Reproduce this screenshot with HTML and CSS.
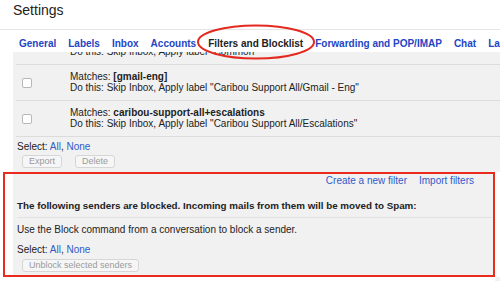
FILE: index.html
```html
<!DOCTYPE html>
<html lang="en">
<head>
  <meta charset="UTF-8">
  <title>Settings - Filters and Blocklist</title>
  <link rel="stylesheet" href="styles.css">
</head>
<body>
<div class="page">
  <h1 class="title">Settings</h1>

  <nav class="tabs">
    <a class="tab">General</a>
    <a class="tab">Labels</a>
    <a class="tab">Inbox</a>
    <a class="tab">Accounts</a>
    <a class="tab active">Filters and Blocklist</a>
    <a class="tab">Forwarding and POP/IMAP</a>
    <a class="tab">Chat</a>
    <a class="tab">Labs</a>
  </nav>

  <div class="panel">
    <div class="filter-list">
      <div class="filter-row first">
        <div class="check-cell"><input type="checkbox" class="check"></div>
        <div class="filter-text">
          <div>Matches: <b>[team-common]</b></div>
          <div>Do this: Skip Inbox, Apply label "Common"</div>
        </div>
      </div>
      <div class="filter-row">
        <div class="check-cell"><input type="checkbox" class="check"></div>
        <div class="filter-text">
          <div>Matches: <b>[gmail-eng]</b></div>
          <div>Do this: Skip Inbox, Apply label "Caribou Support All/Gmail - Eng"</div>
        </div>
      </div>
      <div class="filter-row">
        <div class="check-cell"><input type="checkbox" class="check"></div>
        <div class="filter-text">
          <div>Matches: <b>caribou-support-all+escalations</b></div>
          <div>Do this: Skip Inbox, Apply label "Caribou Support All/Escalations"</div>
        </div>
      </div>
    </div>

    <div class="select-line">Select: <a class="link">All</a>, <a class="link">None</a></div>
    <div class="actions">
      <button class="btn" disabled>Export</button>
      <button class="btn" disabled>Delete</button>
    </div>

    <section class="blocked">
      <div class="filter-links">
        <a class="link">Create a new filter</a>
        <a class="link">Import filters</a>
      </div>
      <h2 class="blocked-title">The following senders are blocked. Incoming mails from them will be moved to Spam:</h2>
      <p class="blocked-note">Use the Block command from a conversation to block a sender.</p>
      <div class="select-line">Select: <a class="link">All</a>, <a class="link">None</a></div>
      <div class="actions">
        <button class="btn wide" disabled>Unblock selected senders</button>
      </div>
    </section>
  </div>

  <!-- red annotations drawn over the screenshot -->
  <svg class="mark-oval" width="122" height="38" viewBox="0 0 122 38">
    <ellipse cx="61" cy="19" rx="58" ry="16.5" fill="none" stroke="#e42a1e" stroke-width="2"/>
  </svg>
  <div class="mark-box"></div>
</div>
</body>
</html>
```

FILE: styles.css
```css
body {
  margin: 0;
  background-color: #ffffff;
  font-family: "Liberation Sans", Arial, Helvetica, sans-serif;
  color: #222222;
}

.page {
  position: relative;
  width: 500px;
  height: 281px;
  overflow: hidden;
}

.title {
  margin: 0;
  padding: 2px 0 10px 13px;
  font-size: 14px;
  line-height: 17px;
  font-weight: normal;
  color: #222222;
  border-bottom: 1px solid #e6e6e6;
}

/* tab bar */
.tabs {
  display: flex;
  gap: 12px;
  padding: 8px 0 2px 19px;
  white-space: nowrap;
}

.tab {
  font-size: 10px;
  line-height: 12px;
  font-weight: bold;
  color: #2445c4;
}

.tab.active {
  color: #222222;
}

/* grey settings panel */
.panel {
  margin-left: 13px;
  background-color: #f1f1f1;
  overflow: hidden;
  font-size: 10px;
  line-height: 11px;
}

.filter-row {
  display: flex;
  margin-left: 3px;
  padding: 6px 0 7px;
  border-bottom: 1px solid #dcdcdc;
}

.filter-row.first {
  margin-top: -23px;
}

.check-cell {
  width: 54px;
  flex-shrink: 0;
}

.check {
  appearance: none;
  display: block;
  width: 10px;
  height: 10px;
  margin: 7px 0 0 6px;
  background-color: #ffffff;
  border: 1px solid #b8b8b8;
  border-radius: 2px;
}

.filter-text {
  white-space: nowrap;
}

.select-line {
  margin-top: 4px;
  padding-left: 4px;
}

.link {
  color: #2f5bc9;
}

.actions {
  display: flex;
  gap: 13px;
  margin-top: 3px;
  padding-left: 9px;
}

.btn {
  height: 13px;
  padding: 0 6px;
  font-family: inherit;
  font-size: 9px;
  line-height: 11px;
  color: #9a9a9a;
  background-color: #f6f6f6;
  border: 1px solid #d6d6d6;
  border-radius: 3px;
}

/* blocked senders */
.blocked {
  padding: 7px 0 12px;
}

.filter-links {
  display: flex;
  justify-content: flex-end;
  gap: 12px;
  padding-right: 26px;
}

.blocked-title {
  margin: 14px 8px 0 4px;
  padding-bottom: 6px;
  font-size: 9.8px;
  line-height: 11px;
  font-weight: bold;
  border-bottom: 1px solid #e2e2e2;
}

.blocked-note {
  margin: 6px 0 0 4px;
}

.blocked .select-line {
  margin-top: 9px;
}

.blocked .actions {
  margin-top: 4px;
}

.mark-oval {
  position: absolute;
  left: 195px;
  top: 23px;
}

.mark-box {
  position: absolute;
  left: 3px;
  top: 172px;
  width: 488px;
  height: 101px;
  border: 2px solid #ea2a1d;
  box-shadow: 6px 0 0 #ffffff, 0 6px 0 #ffffff;
}
```
